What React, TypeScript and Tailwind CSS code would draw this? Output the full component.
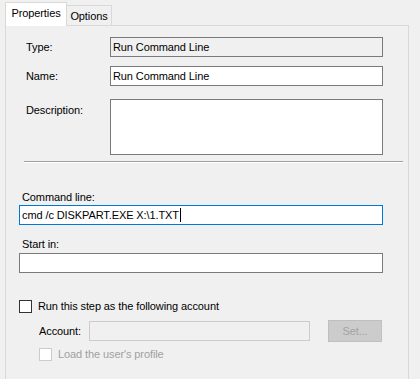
export default function App() {
  return (
    <div className="w-[420px] h-[379px] overflow-hidden bg-[#f0f0f0] text-[11px] tracking-[-0.1px] text-black font-['Liberation_Sans',Arial,sans-serif]">
      {/* Tabs */}
      <div className="flex items-end pl-[5px] pt-[2px]">
        <div className="relative z-10 -mb-px flex h-[24px] w-[62px] items-center justify-center border-x border-t border-[#d9d9d9] bg-white pb-[3px]">
          Properties
        </div>
        <div className="flex h-[20px] w-[45px] items-center justify-center border-r border-t border-[#d9d9d9] pt-px">
          Options
        </div>
      </div>

      {/* Panel */}
      <div className="ml-[5px] h-[400px] w-[404px] border border-[#d9d9d9]">
        <div className="mt-[11px] flex items-center pl-[20px]">
          <div className="w-[84px]">Type:</div>
          <div className="flex h-[20px] w-[273px] items-center border border-[#7a7a7a] bg-[#f0f0f0] px-[2px]">
            Run Command Line
          </div>
        </div>
        <div className="mt-[9px] flex items-center pl-[20px]">
          <div className="w-[84px]">Name:</div>
          <div className="flex h-[20px] w-[273px] items-center border border-[#7a7a7a] bg-white px-[2px]">
            Run Command Line
          </div>
        </div>
        <div className="mt-[13px] flex items-start pl-[20px]">
          <div className="w-[84px] pt-[3px]">Description:</div>
          <div className="h-[56px] w-[273px] border border-[#7a7a7a] bg-white" />
        </div>

        <div className="ml-[18px] mt-[6px] h-[2px] w-[379px] border-b border-white bg-[#a0a0a0] [background-clip:content-box]" />

        <div className="ml-[16px] mt-[26px] h-[16px] leading-[16px]">Command line:</div>
        <div className="ml-[13px] flex h-[20px] w-[364px] items-center border border-[#0078d7] bg-white px-[2px]">
          cmd /c DISKPART.EXE X:\1.TXT
          <span className="ml-px h-[14px] w-px bg-black" />
        </div>

        <div className="ml-[16px] mt-[11px] h-[16px] leading-[16px]">Start in:</div>
        <div className="ml-[13px] mt-px h-[20px] w-[364px] border border-[#7a7a7a] bg-white" />

        <div className="ml-[13px] mt-[27px] flex h-[13px] items-center">
          <div className="h-[13px] w-[13px] border border-[#333333] bg-white" />
          <div className="ml-[6px]">Run this step as the following account</div>
        </div>

        <div className="mt-[7px] flex h-[22px] items-center pl-[33px]">
          <div className="w-[50px]">Account:</div>
          <div className="h-[20px] w-[221px] border border-[#cccccc] bg-[#f0f0f0]" />
          <div className="ml-[18px] flex h-[22px] w-[54px] items-center justify-center border border-[#bfbfbf] bg-[#cccccc] text-[#a3a3a3]">
            Set...
          </div>
        </div>

        <div className="ml-[33px] mt-[6px] flex h-[13px] items-center">
          <div className="h-[13px] w-[13px] border border-[#cccccc] bg-white" />
          <div className="ml-[6px] text-[#a0a0a0]">Load the user&apos;s profile</div>
        </div>
      </div>
    </div>
  );
}
